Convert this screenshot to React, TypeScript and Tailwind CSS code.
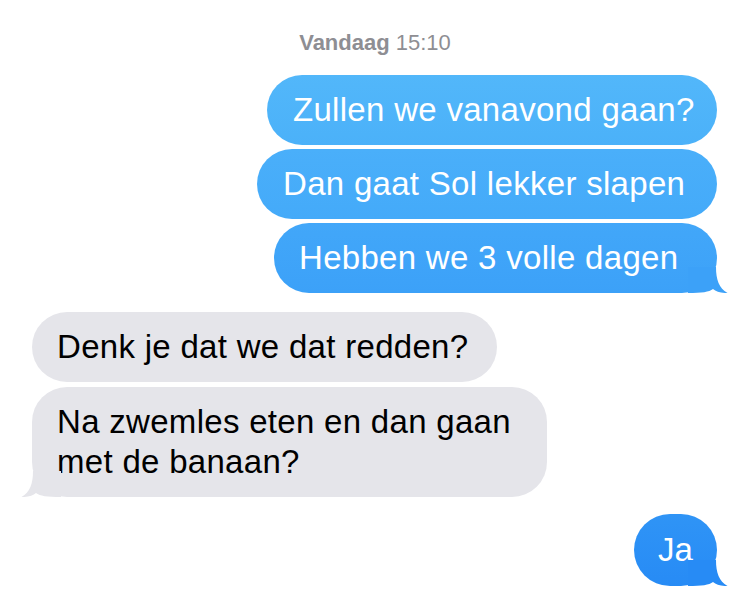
import React from "react";

// iOS-style tail, drawn at the bottom corner of a bubble
function Tail({ color, side }: { color: string; side: "left" | "right" }) {
  return (
    <svg
      width="40"
      height="26"
      viewBox="0 0 40 26"
      className={
        side === "right"
          ? "absolute bottom-0 right-[-11px]"
          : "absolute bottom-0 left-[-11px] -scale-x-100"
      }
    >
      <path
        d="M0 0 H28 C28 13 31 21 39.5 26 C33 26.3 28 24.5 25 22 C21 25 14 26 0 26 Z"
        fill={color}
      />
    </svg>
  );
}

type Msg = {
  text: React.ReactNode;
  width: string;
  pad: string;
  bg: string;
  tail?: string;
  height: string;
};

const outgoing: Msg[] = [
  {
    text: "Zullen we vanavond gaan?",
    width: "w-[450px]",
    pad: "pl-[26px]",
    bg: "bg-gradient-to-b from-[#52b7fa] to-[#4bb1f9]",
    height: "h-[70px]",
  },
  {
    text: "Dan gaat Sol lekker slapen",
    width: "w-[460px]",
    pad: "pl-[26px]",
    bg: "bg-gradient-to-b from-[#4aaffa] to-[#44aaf9]",
    height: "h-[70px]",
  },
  {
    text: "Hebben we 3 volle dagen",
    width: "w-[443px]",
    pad: "pl-[25px]",
    bg: "bg-gradient-to-b from-[#42a7f9] to-[#3ca1f8]",
    tail: "#3ca1f8",
    height: "h-[70px]",
  },
];

export default function App() {
  return (
    <div
      className="w-[750px] h-[603px] bg-white overflow-hidden"
      style={{ fontFamily: '"Liberation Sans", Arial, sans-serif' }}
    >
      {/* Timestamp */}
      <div className="pt-[31px] text-center text-[22px] leading-[24px] text-[#8e8e93]">
        <span className="font-bold">Vandaag</span> 15:10
      </div>

      {/* Sent */}
      <div className="mt-[20px] flex flex-col items-end gap-[4px] pr-[33px]">
        {outgoing.map((m, i) => (
          <div
            key={i}
            className={`relative flex items-center rounded-[35px] ${m.width} ${m.height} ${m.pad} ${m.bg}`}
          >
            <span className="whitespace-nowrap text-[33px] leading-[40px] tracking-[0.3px] text-white">
              {m.text}
            </span>
            {m.tail && <Tail color={m.tail} side="right" />}
          </div>
        ))}
      </div>

      {/* Received */}
      <div className="mt-[19px] flex flex-col items-start gap-[5px] pl-[32px]">
        <div className="flex h-[70px] w-[465px] items-center rounded-[35px] bg-[#e5e5ea] pl-[25px]">
          <span className="whitespace-nowrap text-[33px] leading-[40px] tracking-[0.3px] text-black">
            Denk je dat we dat redden?
          </span>
        </div>

        <div className="relative flex h-[110px] w-[515px] items-center rounded-[35px] bg-[#e5e5ea] pl-[25px]">
          <span className="text-[33px] leading-[40px] tracking-[0.3px] text-black">
            Na zwemles eten en dan gaan
            <br />
            met de banaan?
          </span>
          <Tail color="#e5e5ea" side="left" />
        </div>
      </div>

      {/* Sent reply */}
      <div className="mt-[17px] flex justify-end pr-[33px]">
        <div className="relative flex h-[72px] w-[83px] items-center justify-center rounded-[36px] bg-gradient-to-b from-[#2f94f6] to-[#278bf5]">
          <span className="text-[33px] leading-[40px] text-white">Ja</span>
          <Tail color="#278bf5" side="right" />
        </div>
      </div>
    </div>
  );
}
